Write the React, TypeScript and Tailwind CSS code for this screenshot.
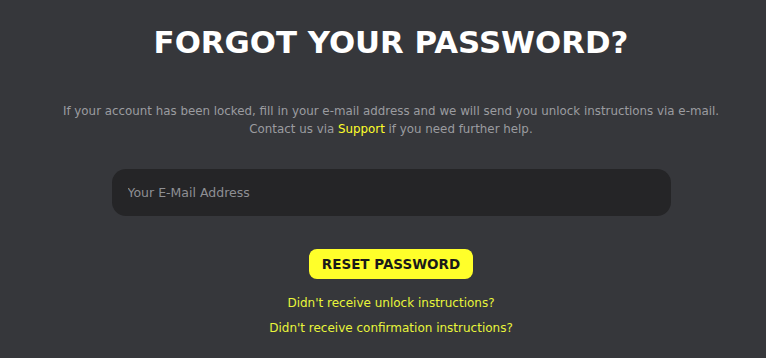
import React, { useState } from 'react';

export default function App() {
  const [email, setEmail] = useState('');

  return (
    <div className="min-h-screen w-full bg-[#36373b] pl-[16px] font-['DejaVu_Sans',sans-serif]">
      <div className="flex flex-col items-center">
        <h1 className="mt-[22px] text-[30.8px] font-bold leading-[40px] text-white">
          FORGOT YOUR PASSWORD?
        </h1>

        <div className="mt-[40px] text-center text-[11.85px] leading-[18px] text-[#9b9ca0]">
          <p>If your account has been locked, fill in your e-mail address and we will send you unlock instructions via e-mail.</p>
          <p>
            Contact us via <a href="#" className="text-[#ffff2a]">Support</a> if you need further help.
          </p>
        </div>

        <form className="mt-[31px] flex w-[559px] flex-col items-center" onSubmit={(e) => e.preventDefault()}>
          <input
            type="email"
            value={email}
            onChange={(e) => setEmail(e.target.value)}
            placeholder="Your E-Mail Address"
            className="h-[47px] w-full rounded-[14px] bg-[#252527] px-[16px] text-[12.5px] text-white placeholder:text-[#8e8f94] focus:outline-none"
          />
          <button
            type="submit"
            className="mt-[33px] h-[30px] w-[164px] rounded-[8px] bg-[#ffff2a] text-[13.5px] font-semibold text-[#1a1a1a]"
          >
            RESET PASSWORD
          </button>
        </form>

        <div className="mt-[15px] flex flex-col items-center gap-[7px] text-[12px] leading-[18px] text-[#e8f53a]">
          <a href="#">Didn't receive unlock instructions?</a>
          <a href="#">Didn't receive confirmation instructions?</a>
        </div>
      </div>
    </div>
  );
}
